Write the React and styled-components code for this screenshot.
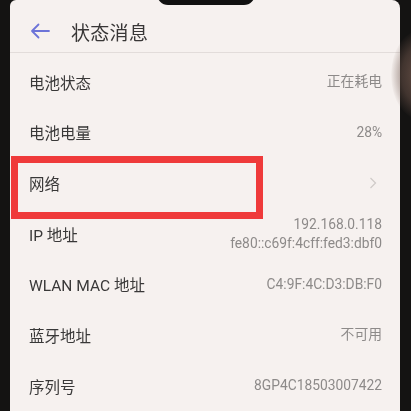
import React from "react";
import styled, { createGlobalStyle } from "styled-components";

const Global = createGlobalStyle`
  html, body { margin: 0; padding: 0; background: #121212; }
  body { width: 411px; height: 411px; overflow: hidden; }
`;

const Frame = styled.div`
  width: 411px;
  height: 411px;
  background: #141312;
  display: flex;
  padding: 0 11px 0 10px;
  box-sizing: border-box;
  position: relative;
  overflow: hidden;
`;

const Screen = styled.div`
  flex: 1;
  background: #f6f1ef;
  border-radius: 6px 8px 0 0;
  position: relative;
  display: flex;
  flex-direction: column;
  font-family: Roboto, "Noto Sans CJK SC", sans-serif;
  filter: blur(0.35px);
`;

const Notch = styled.div`
  position: absolute;
  top: -6px;
  left: 147px;
  width: 98px;
  height: 11px;
  background: #111;
  border-radius: 0 0 12px 12px;
`;

const Header = styled.div`
  height: 56px;
  border-bottom: 1px solid #e2dcda;
  display: flex;
  align-items: center;
  padding: 10px 0 0 20px;
  box-sizing: border-box;
  gap: 21px;
`;

const Title = styled.div`
  font-family: "Noto Sans CJK SC", sans-serif;
  font-size: 19px;
  color: #383636;
  letter-spacing: 0.3px;
`;

const List = styled.div`
  display: flex;
  flex-direction: column;
  padding: 3px 18px 0 19px;
`;

const Row = styled.div`
  height: 50.7px;
  display: flex;
  align-items: center;
  justify-content: space-between;
`;

const Label = styled.div`
  font-size: 15.5px;
  color: #393838;
`;

const Value = styled.div`
  font-size: 13.8px;
  color: #8d8a89;
  text-align: right;
  line-height: 19px;
`;

const Chevron = styled.svg`
  width: 8px;
  height: 12px;
  margin-right: 5px;
`;

const Mark = styled.div`
  position: absolute;
  left: 1px;
  top: 156px;
  width: 252px;
  height: 63px;
  border: 7px solid #ef3a3a;
  box-sizing: border-box;
`;

const Finger = styled.div`
  position: absolute;
  right: -40px;
  top: 30px;
  width: 60px;
  height: 90px;
  border-radius: 50%;
  background: radial-gradient(ellipse at center, rgba(110,85,75,0.9) 0%, rgba(110,85,75,0.5) 45%, rgba(110,85,75,0) 72%);
`;

const BackArrow = () => (
  <svg width="20" height="16" viewBox="0 0 20 16">
    <path d="M19 8H2M8.5 1.5L2 8l6.5 6.5" fill="none" stroke="#6d74d8" strokeWidth="1.8" strokeLinecap="round" strokeLinejoin="round" />
  </svg>
);

const rows = [
  { label: "电池状态", value: "正在耗电" },
  { label: "电池电量", value: "28%" },
  { label: "网络", chevron: true },
  { label: "IP 地址", value: ["192.168.0.118", "fe80::c69f:4cff:fed3:dbf0"] },
  { label: "WLAN MAC 地址", value: "C4:9F:4C:D3:DB:F0" },
  { label: "蓝牙地址", value: "不可用" },
  { label: "序列号", value: "8GP4C18503007422" },
];

export default function App() {
  return (
    <>
      <Global />
      <Frame>
        <Screen>
          <Notch />
          <Header>
            <BackArrow />
            <Title>状态消息</Title>
          </Header>
          <List>
            {rows.map((r) => (
              <Row key={r.label}>
                <Label>{r.label}</Label>
                {r.chevron ? (
                  <Chevron viewBox="0 0 8 12">
                    <path d="M1.5 1l5 5-5 5" fill="none" stroke="#cfcac8" strokeWidth="1.2" />
                  </Chevron>
                ) : (
                  <Value>
                    {Array.isArray(r.value)
                      ? r.value.map((v) => <div key={v}>{v}</div>)
                      : r.value}
                  </Value>
                )}
              </Row>
            ))}
          </List>
          <Mark />
        </Screen>
        <Finger />
      </Frame>
    </>
  );
}
